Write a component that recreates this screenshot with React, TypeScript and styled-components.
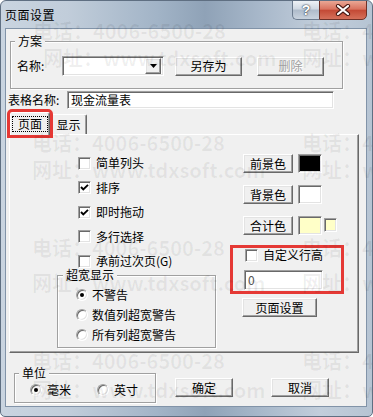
import React from "react"
import styled, { createGlobalStyle, css } from "styled-components"

const FONT = `"Noto Sans CJK SC", "Liberation Sans", sans-serif`

const GlobalStyle = createGlobalStyle`
  html, body {
    margin: 0;
    padding: 0;
    background: #ffffff;
  }
  body {
    font-family: ${FONT};
    font-size: 12px;
    color: #000;
  }
`

const raised = css`
  background: #f0f0f0;
  border: 1px solid;
  border-color: #ffffff #696969 #696969 #ffffff;
  box-shadow: inset -1px -1px 0 #a0a0a0, inset 1px 1px 0 #e3e3e3;
`

const sunken = css`
  border: 1px solid;
  border-color: #a0a0a0 #ffffff #ffffff #a0a0a0;
  box-shadow: inset 1px 1px 0 #696969, inset -1px -1px 0 #e3e3e3;
`

const Window = styled.div`
  position: relative;
  width: 373px;
  height: 417px;
  box-sizing: border-box;
  display: flex;
  flex-direction: column;
  border: 1px solid #5f6f82;
  border-radius: 6px 6px 5px 5px;
  overflow: hidden;
  font-family: ${FONT};
  background: linear-gradient(
    90deg,
    #c9d4e0 0%,
    #c1cdda 18%,
    #a2b4c7 42%,
    #8fa2b7 55%,
    #a8b8ca 70%,
    #c2cedb 86%,
    #b6c4d3 100%
  );
`

const TitleBar = styled.div`
  height: 27px;
  flex: none;
  display: flex;
  align-items: flex-start;
  padding: 0 5px 0 4px;
`

const TitleText = styled.span`
  align-self: center;
  font-size: 12px;
  letter-spacing: 0.5px;
  line-height: 14px;
  color: #000;
`

const CaptionGroup = styled.div`
  margin-left: auto;
  margin-top: -1px;
  display: flex;
`

const CaptionButton = styled.div<{ $kind: "help" | "close" }>`
  height: 20px;
  box-sizing: border-box;
  display: flex;
  align-items: center;
  justify-content: center;
  color: #fff;
  font-weight: 700;
  font-size: 14px;
  font-family: "Liberation Sans", sans-serif;
  text-shadow: 0 0 2px #2a3340, 0 0 1px #2a3340;
  ${(p) =>
    p.$kind === "help"
      ? css`
          width: 27px;
          border: 1px solid #6b7b8e;
          border-right: none;
          border-radius: 0 0 0 5px;
          background: linear-gradient(#eef2f6 0%, #cfd8e2 45%, #aebbca 50%, #c9d3de 100%);
        `
      : css`
          width: 48px;
          border: 1px solid #6f3128;
          border-radius: 0 0 5px 0;
          background: linear-gradient(#eaa795 0%, #d9735f 45%, #c44a36 52%, #d5705a 100%);
        `}
`

const Client = styled.div`
  flex: 1;
  margin: 0 5px 9px 4px;
  border: 1px solid #8193a8;
  background: #f0f0f0;
  display: flex;
  flex-direction: column;
  min-height: 0;
`

const GroupBox = styled.div<{ $w: number; $h: number }>`
  position: relative;
  box-sizing: border-box;
  width: ${(p) => p.$w}px;
  height: ${(p) => p.$h}px;
  border: 1px solid #a0a0a0;
  box-shadow: inset 1px 1px 0 #ffffff, 1px 1px 0 #ffffff;
`

const GroupCaption = styled.span<{ $left: number }>`
  position: absolute;
  top: -8px;
  left: ${(p) => p.$left}px;
  padding: 0 3px;
  background: #f0f0f0;
  font-size: 12px;
  line-height: 14px;
`

const SchemeBox = styled(GroupBox)`
  margin: 12px 0 0 4px;
  padding: 14px 0 0 6px;
`

const Row = styled.div`
  display: flex;
  align-items: center;
`

const Label = styled.span<{ $w?: number }>`
  font-size: 12px;
  line-height: 14px;
  white-space: nowrap;
  ${(p) => p.$w && `width: ${p.$w}px;`}
`

const Field = styled.div<{ $w: number; $h: number }>`
  ${sunken};
  box-sizing: border-box;
  width: ${(p) => p.$w}px;
  height: ${(p) => p.$h}px;
  background: #fff;
  display: flex;
  align-items: center;
  padding-left: 3px;
  font-size: 12px;
  line-height: 14px;
  color: #000;
`

const ComboField = styled(Field)`
  justify-content: flex-end;
  padding: 2px;
`

const DropButton = styled.span`
  ${raised};
  box-sizing: border-box;
  width: 16px;
  height: 16px;
  display: flex;
  align-items: center;
  justify-content: center;
`

const Button = styled.div<{ $w: number; $disabled?: boolean }>`
  ${raised};
  box-sizing: border-box;
  width: ${(p) => p.$w}px;
  height: 19px;
  flex: none;
  display: flex;
  align-items: center;
  justify-content: center;
  font-size: 12px;
  line-height: 14px;
  color: ${(p) => (p.$disabled ? "#a0a0a0" : "#000")};
  ${(p) => p.$disabled && "text-shadow: 1px 1px 0 #ffffff;"}
`

const TableNameRow = styled(Row)`
  margin: 2px 0 0 2px;
  height: 18px;
`

const TabStrip = styled.div`
  margin-top: 3px;
  padding-left: 4px;
  height: 22px;
  display: flex;
  align-items: flex-end;
`

const Tab = styled.div<{ $active?: boolean; $w: number }>`
  position: relative;
  box-sizing: border-box;
  width: ${(p) => p.$w}px;
  height: ${(p) => (p.$active ? 23 : 20)}px;
  margin-bottom: ${(p) => (p.$active ? -1 : 0)}px;
  z-index: ${(p) => (p.$active ? 2 : 1)};
  background: #f0f0f0;
  border: 1px solid;
  border-bottom: none;
  border-color: #ffffff #696969 transparent #ffffff;
  box-shadow: inset -1px 0 0 #a0a0a0;
  border-radius: 2px 2px 0 0;
  display: flex;
  align-items: ${(p) => (p.$active ? "flex-start" : "center")};
  justify-content: center;
  padding-top: ${(p) => (p.$active ? 3 : 0)}px;
  font-size: 12px;
  line-height: 14px;
  ${(p) => p.$active && "outline: 3px solid #e53935;"}
`

const FocusText = styled.span`
  border: 1px dotted #000;
  padding: 0 5px;
`

const Panel = styled.div`
  margin-left: 3px;
  width: 350px;
  height: 219px;
  box-sizing: border-box;
  border: 1px solid;
  border-color: #ffffff #696969 #696969 #ffffff;
  box-shadow: inset -1px -1px 0 #a0a0a0;
  display: flex;
`

const LeftCol = styled.div`
  width: 220px;
  padding-top: 21px;
  display: flex;
  flex-direction: column;
`

const CheckList = styled.div`
  margin-left: 68px;
  display: flex;
  flex-direction: column;
  gap: 10.5px;
`

const OptionRow = styled.label<{ $gap?: number }>`
  display: flex;
  align-items: center;
  gap: ${(p) => p.$gap ?? 5}px;
  height: 14px;
  font-size: 12px;
  line-height: 14px;
  white-space: nowrap;
`

const CheckBox = styled.span`
  ${sunken};
  box-sizing: border-box;
  width: 13px;
  height: 13px;
  background: #fff;
  display: flex;
  align-items: center;
  justify-content: center;
`

const RadioBox = styled.span`
  ${sunken};
  box-sizing: border-box;
  width: 12px;
  height: 12px;
  border-radius: 50%;
  background: #fff;
  display: flex;
  align-items: center;
  justify-content: center;
`

const RadioDot = styled.span`
  width: 4px;
  height: 4px;
  border-radius: 50%;
  background: #000;
`

const WideBox = styled(GroupBox)`
  margin: 7px 0 0 47px;
  padding: 12px 0 0 18px;
  display: flex;
  flex-direction: column;
  gap: 6px;
`

const RightCol = styled.div`
  width: 114px;
  padding-top: 19px;
  display: flex;
  flex-direction: column;
  align-items: flex-start;
`

const ColorRow = styled.div`
  margin: 0 0 12px 13px;
  display: flex;
  align-items: flex-start;
  gap: 5px;
`

const Swatch = styled.span<{ $color: string; $w: number; $h: number; $top?: number }>`
  ${sunken};
  box-sizing: border-box;
  width: ${(p) => p.$w}px;
  height: ${(p) => p.$h}px;
  margin-top: ${(p) => p.$top ?? 0}px;
  background: ${(p) => p.$color};
`

const SmallSwatch = styled(Swatch)`
  margin-left: -3px;
`

const RowHeightBox = styled.div`
  margin-top: -2px;
  width: 114px;
  height: 49px;
  box-sizing: border-box;
  border: 3px solid #e53935;
  padding-left: 11px;
  display: flex;
  flex-direction: column;
`

const RowHeightInput = styled(Field)`
  margin-top: 8px;
  color: #555;
`

const SetupButton = styled(Button)`
  margin: 4px 0 0 12px;
`

const BottomRow = styled.div`
  margin: 20px 0 0 8px;
  display: flex;
  align-items: flex-start;
`

const UnitBox = styled(GroupBox)`
  padding: 9px 0 0 15px;
  display: flex;
  gap: 26px;
`

const FooterButton = styled(Button)<{ $left: number }>`
  margin: 5px 0 0 ${(p) => p.$left}px;
`

const Watermark = styled.div`
  position: absolute;
  inset: 0;
  pointer-events: none;
  z-index: 5;
`

const Mark = styled.span<{ $top: number; $left: number }>`
  position: absolute;
  top: ${(p) => p.$top}px;
  left: ${(p) => p.$left}px;
  font-family: ${FONT};
  font-weight: 700;
  font-size: 20px;
  line-height: 20px;
  color: rgba(0, 0, 0, 0.06);
  white-space: nowrap;
`

const PHONE = "电话：4006-6500-28"
const SITE = "网址：www.tdxsoft.com"

const marks = [
  { top: 20, left: 32, text: PHONE },
  { top: 20, left: 301, text: PHONE },
  { top: 47, left: 42, text: SITE },
  { top: 47, left: 301, text: SITE },
  { top: 132, left: 31, text: PHONE },
  { top: 132, left: 301, text: PHONE },
  { top: 159, left: 31, text: SITE },
  { top: 159, left: 301, text: SITE },
  { top: 237, left: 31, text: PHONE },
  { top: 237, left: 301, text: PHONE },
  { top: 272, left: 31, text: SITE },
  { top: 272, left: 301, text: SITE },
  { top: 350, left: 31, text: PHONE },
  { top: 350, left: 301, text: PHONE },
  { top: 379, left: 31, text: SITE },
  { top: 379, left: 301, text: SITE },
]

const CheckMark = () => (
  <svg width="9" height="9" viewBox="0 0 9 9">
    <polyline points="1,4 3.3,6.5 8,1.8" fill="none" stroke="#000" strokeWidth="1.9" />
  </svg>
)

const Check = ({ label, checked }: { label: string; checked?: boolean }) => (
  <OptionRow>
    <CheckBox>{checked && <CheckMark />}</CheckBox>
    {label}
  </OptionRow>
)

const Radio = ({ label, checked, gap }: { label: string; checked?: boolean; gap?: number }) => (
  <OptionRow $gap={gap}>
    <RadioBox>{checked && <RadioDot />}</RadioBox>
    {label}
  </OptionRow>
)

const CloseGlyph = () => (
  <svg width="16" height="12" viewBox="0 0 16 12">
    <path d="M3 2 L13 10 M13 2 L3 10" stroke="#4a1a14" strokeWidth="4.2" strokeLinecap="round" />
    <path d="M3 2 L13 10 M13 2 L3 10" stroke="#ffffff" strokeWidth="2.2" strokeLinecap="round" />
  </svg>
)

const App = () => {
  return (
    <>
      <GlobalStyle />
      <Window>
        <TitleBar>
          <TitleText>页面设置</TitleText>
          <CaptionGroup>
            <CaptionButton $kind="help">?</CaptionButton>
            <CaptionButton $kind="close">
              <CloseGlyph />
            </CaptionButton>
          </CaptionGroup>
        </TitleBar>

        <Client>
          <SchemeBox $w={333} $h={48}>
            <GroupCaption $left={4}>方案</GroupCaption>
            <Row>
              <Label $w={45}>名称:</Label>
              <ComboField $w={102} $h={20}>
                <DropButton>
                  <svg width="7" height="4" viewBox="0 0 7 4">
                    <polygon points="0,0 7,0 3.5,4" fill="#000" />
                  </svg>
                </DropButton>
              </ComboField>
              <Button $w={67} style={{ marginLeft: 11 }}>
                另存为
              </Button>
              <Button $w={67} $disabled style={{ marginLeft: 15 }}>
                删除
              </Button>
            </Row>
          </SchemeBox>

          <TableNameRow>
            <Label $w={59}>表格名称:</Label>
            <Field $w={267} $h={18}>
              现金流量表
            </Field>
          </TableNameRow>

          <TabStrip>
            <Tab $active $w={40}>
              <FocusText>页面</FocusText>
            </Tab>
            <Tab $w={37}>显示</Tab>
          </TabStrip>

          <Panel>
            <LeftCol>
              <CheckList>
                <Check label="简单列头" />
                <Check label="排序" checked />
                <Check label="即时拖动" checked />
                <Check label="多行选择" />
                <Check label="承前过次页(G)" />
              </CheckList>
              <WideBox $w={159} $h={73}>
                <GroupCaption $left={5}>超宽显示</GroupCaption>
                <Radio label="不警告" checked gap={4} />
                <Radio label="数值列超宽警告" gap={4} />
                <Radio label="所有列超宽警告" gap={4} />
              </WideBox>
            </LeftCol>

            <RightCol>
              <ColorRow>
                <Button $w={50}>前景色</Button>
                <Swatch $color="#000000" $w={24} $h={19} />
              </ColorRow>
              <ColorRow>
                <Button $w={50}>背景色</Button>
                <Swatch $color="#ffffff" $w={24} $h={19} />
              </ColorRow>
              <ColorRow>
                <Button $w={50}>合计色</Button>
                <Swatch $color="#ffffc8" $w={24} $h={19} />
                <SmallSwatch $color="#ffffc8" $w={13} $h={14} $top={2} />
              </ColorRow>
              <RowHeightBox>
                <OptionRow style={{ marginLeft: 1 }}>
                  <CheckBox />
                  自定义行高
                </OptionRow>
                <RowHeightInput $w={79} $h={20}>
                  0
                </RowHeightInput>
              </RowHeightBox>
              <SetupButton $w={75}>页面设置</SetupButton>
            </RightCol>
          </Panel>

          <BottomRow>
            <UnitBox $w={142} $h={30}>
              <GroupCaption $left={4}>单位</GroupCaption>
              <Radio label="毫米" checked />
              <Radio label="英寸" />
            </UnitBox>
            <FooterButton $w={58} $left={19}>
              确定
            </FooterButton>
            <FooterButton $w={58} $left={38}>
              取消
            </FooterButton>
          </BottomRow>
        </Client>

        <Watermark>
          {marks.map((m, i) => (
            <Mark key={i} $top={m.top} $left={m.left}>
              {m.text}
            </Mark>
          ))}
        </Watermark>
      </Window>
    </>
  )
}

export default App
